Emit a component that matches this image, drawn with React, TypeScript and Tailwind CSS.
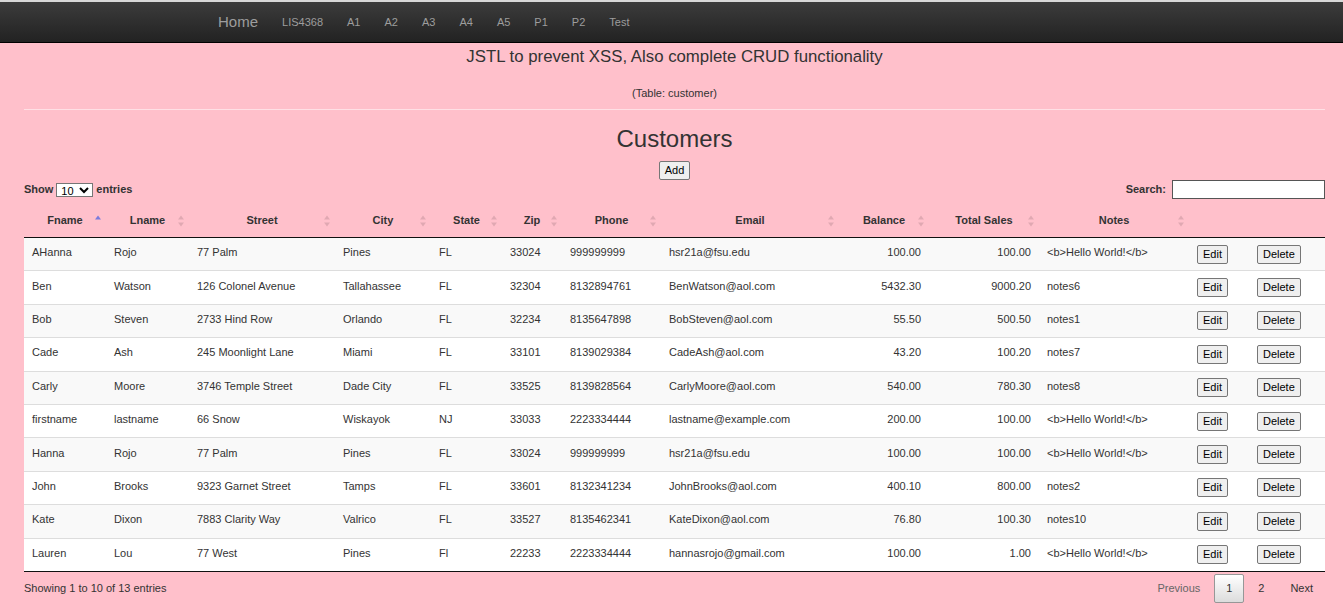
import React from 'react';

type Customer = {
    fname: string;
    lname: string;
    street: string;
    city: string;
    state: string;
    zip: string;
    phone: string;
    email: string;
    balance: string;
    sales: string;
    notes: string;
};

const customers: Customer[] = [
    { fname: 'AHanna', lname: 'Rojo', street: '77 Palm', city: 'Pines', state: 'FL', zip: '33024', phone: '999999999', email: 'hsr21a@fsu.edu', balance: '100.00', sales: '100.00', notes: '<b>Hello World!</b>' },
    { fname: 'Ben', lname: 'Watson', street: '126 Colonel Avenue', city: 'Tallahassee', state: 'FL', zip: '32304', phone: '8132894761', email: 'BenWatson@aol.com', balance: '5432.30', sales: '9000.20', notes: 'notes6' },
    { fname: 'Bob', lname: 'Steven', street: '2733 Hind Row', city: 'Orlando', state: 'FL', zip: '32234', phone: '8135647898', email: 'BobSteven@aol.com', balance: '55.50', sales: '500.50', notes: 'notes1' },
    { fname: 'Cade', lname: 'Ash', street: '245 Moonlight Lane', city: 'Miami', state: 'FL', zip: '33101', phone: '8139029384', email: 'CadeAsh@aol.com', balance: '43.20', sales: '100.20', notes: 'notes7' },
    { fname: 'Carly', lname: 'Moore', street: '3746 Temple Street', city: 'Dade City', state: 'FL', zip: '33525', phone: '8139828564', email: 'CarlyMoore@aol.com', balance: '540.00', sales: '780.30', notes: 'notes8' },
    { fname: 'firstname', lname: 'lastname', street: '66 Snow', city: 'Wiskayok', state: 'NJ', zip: '33033', phone: '2223334444', email: 'lastname@example.com', balance: '200.00', sales: '100.00', notes: '<b>Hello World!</b>' },
    { fname: 'Hanna', lname: 'Rojo', street: '77 Palm', city: 'Pines', state: 'FL', zip: '33024', phone: '999999999', email: 'hsr21a@fsu.edu', balance: '100.00', sales: '100.00', notes: '<b>Hello World!</b>' },
    { fname: 'John', lname: 'Brooks', street: '9323 Garnet Street', city: 'Tamps', state: 'FL', zip: '33601', phone: '8132341234', email: 'JohnBrooks@aol.com', balance: '400.10', sales: '800.00', notes: 'notes2' },
    { fname: 'Kate', lname: 'Dixon', street: '7883 Clarity Way', city: 'Valrico', state: 'FL', zip: '33527', phone: '8135462341', email: 'KateDixon@aol.com', balance: '76.80', sales: '100.30', notes: 'notes10' },
    { fname: 'Lauren', lname: 'Lou', street: '77 West', city: 'Pines', state: 'Fl', zip: '22233', phone: '2223334444', email: 'hannasrojo@gmail.com', balance: '100.00', sales: '1.00', notes: '<b>Hello World!</b>' },
];

const navItems = ['LIS4368', 'A1', 'A2', 'A3', 'A4', 'A5', 'P1', 'P2', 'Test'];

const SortIcon = ({ active }: { active?: boolean }) => (
    <svg
        width="6"
        height="12"
        viewBox="0 0 6 12"
        className="absolute right-[5px] top-1/2 -translate-y-1/2"
    >
        {active ? (
            <polygon points="0,4.5 3,0.5 6,4.5" fill="#7b7bdc" />
        ) : (
            <>
                <polygon points="0,4.5 3,0.5 6,4.5" fill="#000" fillOpacity="0.12" />
                <polygon points="0,7.5 3,11.5 6,7.5" fill="#000" fillOpacity="0.12" />
            </>
        )}
    </svg>
);

const Th = ({ label, active, sortable = true }: { label?: string; active?: boolean; sortable?: boolean }) => (
    <th className="relative border-b border-[#111] px-[18px] py-[10px] text-center text-[11px] font-bold leading-[13px] text-[#333]">
        {label}
        {sortable && <SortIcon active={active} />}
    </th>
);

const SmallButton = ({ children }: { children: React.ReactNode }) => (
    <button className="h-[19px] rounded-[2px] border border-[#767676] bg-[#efefef] px-[5px] text-[11px] leading-[15px] text-black">
        {children}
    </button>
);

export default function App() {
    return (
        <div className="min-h-[616px] bg-[#ffc0cb] text-[#333]" style={{ fontFamily: '"Liberation Sans", Arial, sans-serif' }}>
            {/* Navbar */}
            <div className="h-[2px] bg-[#d8d8d8]" />
            <nav className="flex h-[41px] items-center border-b border-black bg-gradient-to-b from-[#3c3c3c] to-[#222] pl-[206px]">
                <a className="px-3 text-[15px] text-[#9d9d9d]">Home</a>
                {navItems.map((item) => (
                    <a key={item} className="px-3 text-[11px] text-[#9d9d9d]">
                        {item}
                    </a>
                ))}
            </nav>

            <div className="ml-[24px] mr-[18px]">
                {/* Title block */}
                <div className="mt-[4px] text-center text-[16.8px] leading-[20px]">
                    JSTL to prevent XSS, Also complete CRUD functionality
                </div>
                <div className="mt-[20px] text-center text-[11px] leading-[13px]">(Table: customer)</div>
                <div className="mt-[9px] h-px bg-white/50" />

                <h2 className="mt-[15px] text-center text-[24px] leading-[28px]">Customers</h2>
                <div className="mt-[8px] flex justify-center">
                    <SmallButton>Add</SmallButton>
                </div>

                {/* Length + search */}
                <div className="flex h-[19px] items-center justify-between">
                    <div className="flex items-center gap-[3px] text-[11px] font-bold">
                        <span>Show</span>
                        <select className="h-[14px] w-[37px] border border-[#767676] bg-white text-[11px] font-normal leading-[12px] text-black">
                            <option>10</option>
                        </select>
                        <span>entries</span>
                    </div>
                    <div className="flex items-center gap-[6px] text-[11px] font-bold">
                        <span>Search:</span>
                        <input className="h-[19px] w-[153px] border border-[#555] bg-white" />
                    </div>
                </div>

                {/* Table */}
                <table className="mt-[5px] w-full table-fixed border-collapse">
                    <colgroup>
                        <col className="w-[82px]" />
                        <col className="w-[83px]" />
                        <col className="w-[146px]" />
                        <col className="w-[96px]" />
                        <col className="w-[71px]" />
                        <col className="w-[60px]" />
                        <col className="w-[99px]" />
                        <col className="w-[178px]" />
                        <col className="w-[90px]" />
                        <col className="w-[110px]" />
                        <col className="w-[150px]" />
                        <col className="w-[60px]" />
                        <col className="w-[76px]" />
                    </colgroup>
                    <thead>
                        <tr>
                            <Th label="Fname" active />
                            <Th label="Lname" />
                            <Th label="Street" />
                            <Th label="City" />
                            <Th label="State" />
                            <Th label="Zip" />
                            <Th label="Phone" />
                            <Th label="Email" />
                            <Th label="Balance" />
                            <Th label="Total Sales" />
                            <Th label="Notes" />
                            <Th sortable={false} />
                            <Th sortable={false} />
                        </tr>
                    </thead>
                    <tbody className="border-b border-[#111] text-[11px] leading-[13px]">
                        {customers.map((c, i) => (
                            <tr
                                key={i}
                                className={`h-[33.4px] ${i > 0 ? 'border-t border-[#ddd]' : ''} ${i % 2 === 0 ? 'bg-[#f9f9f9]' : 'bg-white'}`}
                            >
                                <td className="px-[8px] pb-[3px]">{c.fname}</td>
                                <td className="px-[8px] pb-[3px]">{c.lname}</td>
                                <td className="px-[8px] pb-[3px]">{c.street}</td>
                                <td className="px-[8px] pb-[3px]">{c.city}</td>
                                <td className="px-[8px] pb-[3px]">{c.state}</td>
                                <td className="px-[8px] pb-[3px]">{c.zip}</td>
                                <td className="px-[8px] pb-[3px]">{c.phone}</td>
                                <td className="px-[8px] pb-[3px]">{c.email}</td>
                                <td className="px-[8px] pb-[3px] text-right">{c.balance}</td>
                                <td className="px-[8px] pb-[3px] text-right">{c.sales}</td>
                                <td className="px-[8px] pb-[3px]">{c.notes}</td>
                                <td className="px-[8px]">
                                    <SmallButton>Edit</SmallButton>
                                </td>
                                <td className="px-[8px]">
                                    <SmallButton>Delete</SmallButton>
                                </td>
                            </tr>
                        ))}
                    </tbody>
                </table>

                {/* Info + paging */}
                <div className="flex items-center justify-between text-[11px]">
                    <span>Showing 1 to 10 of 13 entries</span>
                    <div className="flex items-center">
                        <span className="px-[14px] py-[8px] text-[#666]">Previous</span>
                        <span className="flex h-[29px] w-[30px] items-center justify-center rounded-[2px] border border-[#979797] bg-gradient-to-b from-white to-[#dcdcdc] text-[#333]">
                            1
                        </span>
                        <span className="px-[14px] py-[8px] text-[#333]">2</span>
                        <span className="px-[12px] py-[8px] text-[#333]">Next</span>
                    </div>
                </div>
            </div>
        </div>
    );
}
